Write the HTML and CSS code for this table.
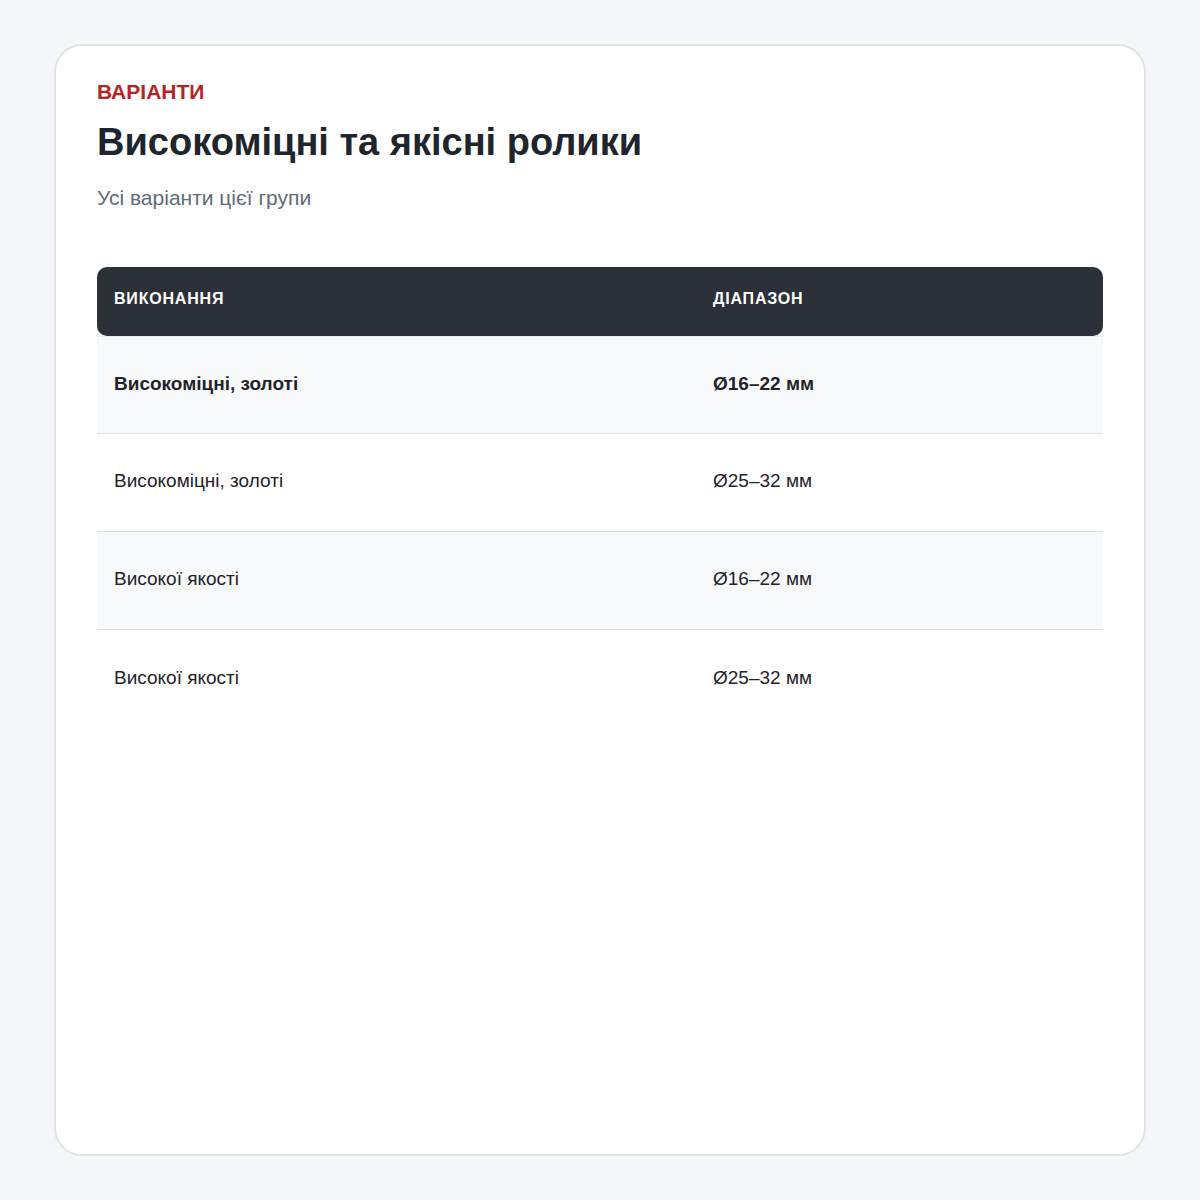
FILE: index.html
```html
<!DOCTYPE html>
<html lang="uk">
<head>
<meta charset="utf-8">
<link rel="stylesheet" href="styles.css">
</head>
<body>
<main class="card">
  <div class="eyebrow">ВАРІАНТИ</div>
  <h1 class="title">Високоміцні та якісні ролики</h1>
  <p class="subtitle">Усі варіанти цієї групи</p>
  <table class="variants">
    <thead>
      <tr><th class="col-a">Виконання</th><th>Діапазон</th></tr>
    </thead>
    <tbody>
      <tr class="strong"><td>Високоміцні, золоті</td><td>Ø16–22 мм</td></tr>
      <tr><td>Високоміцні, золоті</td><td>Ø25–32 мм</td></tr>
      <tr><td>Високої якості</td><td>Ø16–22 мм</td></tr>
      <tr><td>Високої якості</td><td>Ø25–32 мм</td></tr>
    </tbody>
  </table>
</main>
</body>
</html>
```
FILE: styles.css
```css
* { box-sizing: border-box; }
html, body { margin: 0; }
body {
  background: #f5f6f8;
  padding: 44px 54px;
  font-family: "Liberation Sans", Arial, sans-serif;
  color: #1f2329;
}
.card {
  background: #fff;
  border: 2px solid #dfe2e8;
  border-radius: 28px;
  height: 1112px;
  padding: 32px 41px;
}
.eyebrow {
  color: #b62525;
  font-weight: 700;
  font-size: 21px;
  line-height: 28px;
}
.title {
  margin: 13px 0 0;
  font-size: 38px;
  line-height: 46px;
  font-weight: 700;
  color: #1f252d;
}
.subtitle {
  margin: 18px 0 0;
  font-size: 21px;
  line-height: 30px;
  color: #5f6b7a;
}
.variants {
  margin-top: 54px;
  width: 100%;
  border-collapse: separate;
  border-spacing: 0;
}
.variants th {
  background: #2b3039;
  color: #fff;
  text-align: left;
  text-transform: uppercase;
  font-size: 16px;
  letter-spacing: 0.05em;
  font-weight: 700;
  height: 69px;
  padding: 0 17px 5px;
}
.variants th.col-a { width: 599px; border-radius: 10px 0 0 10px; }
.variants th:last-child { border-radius: 0 10px 10px 0; }
.variants td {
  font-size: 19px;
  height: 98px;
  padding: 0 17px 3px;
  border-bottom: 1px solid #dde1e6;
  color: #1f2329;
}
.variants tbody tr:first-child td { border-top: 1px solid #e6e8ec; }
.variants tbody tr:nth-child(odd) td { background: #f8f9fb; }
.variants tbody tr:last-child td { border-bottom: none; }
.variants tr.strong td { font-weight: 700; }
```
